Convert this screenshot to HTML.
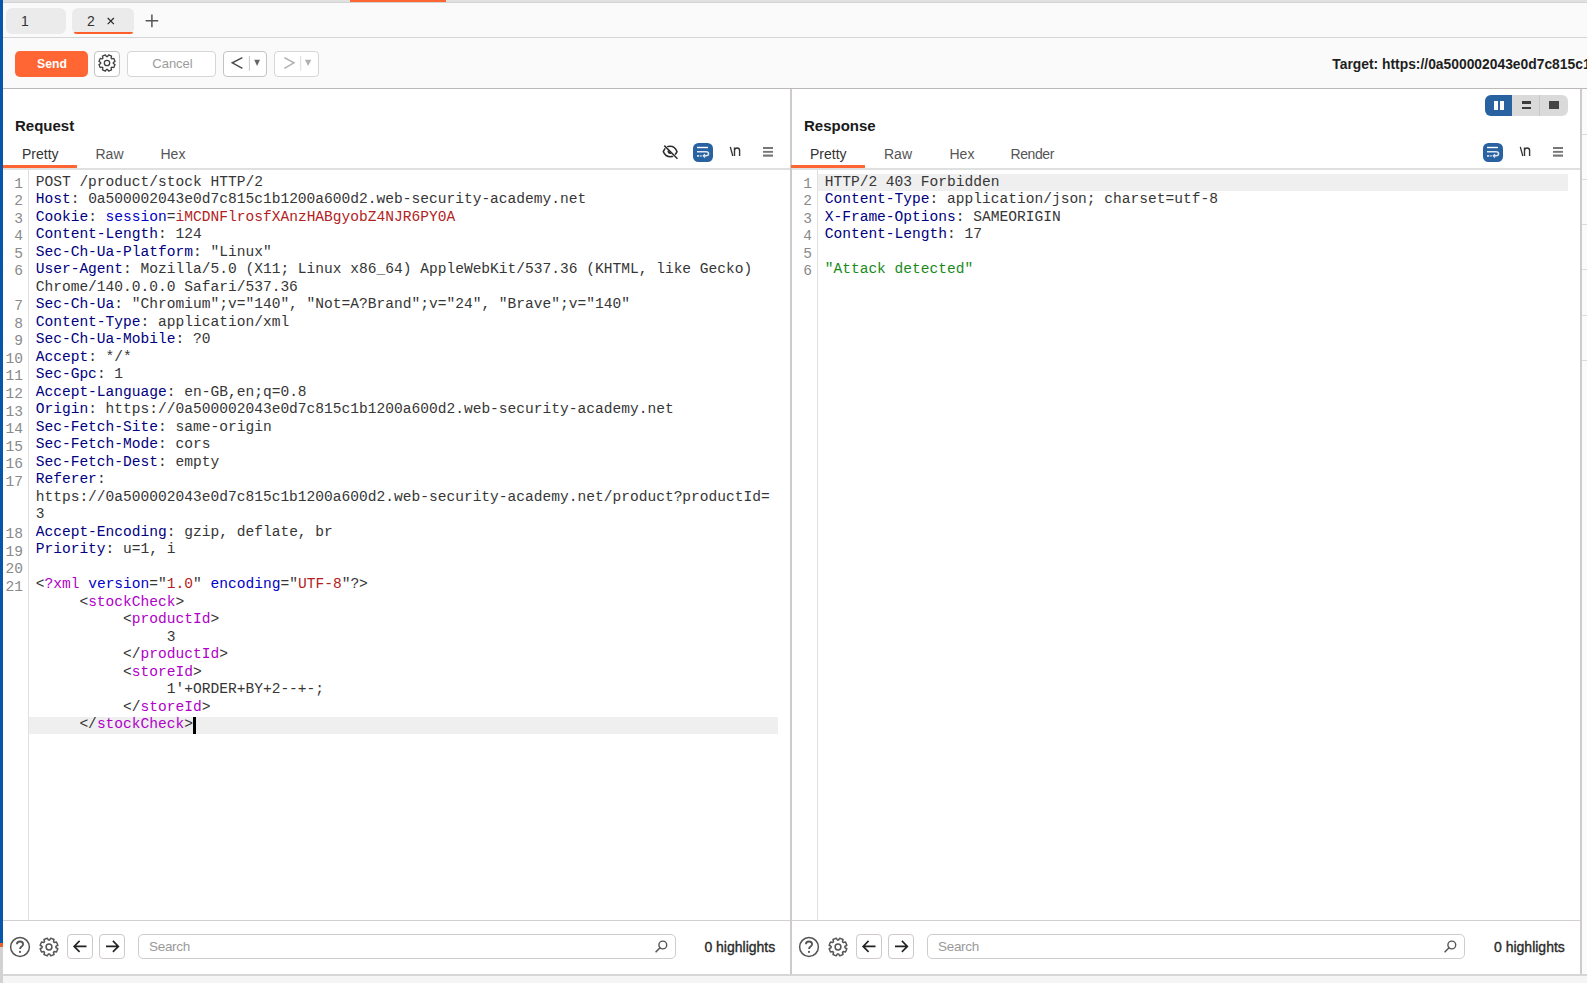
<!DOCTYPE html>
<html><head><meta charset="utf-8"><title>Repeater</title>
<style>
*{margin:0;padding:0;box-sizing:border-box}
html,body{width:1587px;height:983px;overflow:hidden}
body{position:relative;background:#fafafa;font-family:"Liberation Sans",sans-serif;color:#222}
.a{position:absolute}
.ui{font-family:"Liberation Sans",sans-serif}
.code{position:absolute;font-family:"Liberation Mono",monospace;font-size:14.57px;line-height:17.52px;white-space:pre;color:#363636}
.ln{position:absolute;font-family:"Liberation Mono",monospace;font-size:14.57px;line-height:17.52px;white-space:pre;color:#8a8a8a;text-align:right}
.h{color:#000080}
.b{color:#0000c8}
.r{color:#b22222}
.t{color:#b000c8}
.g{color:#1a8a1a}
.btn{position:absolute;border:1px solid #c4c4c4;border-radius:4px;background:#fff}
</style></head><body>

<!-- top strip -->
<div class="a" style="left:0;top:0;width:1587px;height:3px;background:#e1e1e1;border-bottom:1px solid #d0d4d4"></div>
<div class="a" style="left:350px;top:0;width:96px;height:2px;background:#ff6633"></div>

<!-- tab bar -->
<div class="a" style="left:6px;top:8px;width:60px;height:26px;background:#ebebeb;border-radius:6px"></div>
<div class="a ui" style="left:21px;top:11px;font-size:14px;line-height:20px;color:#333">1</div>
<div class="a" style="left:72px;top:8px;width:62px;height:26px;background:#ebebeb;border-radius:6px"></div>
<div class="a ui" style="left:87px;top:11px;font-size:14px;line-height:20px;color:#333">2</div>
<svg class="a" style="left:106px;top:16px" width="10" height="10" viewBox="0 0 10 10"><path d="M1.7,2 L7.9,8.2 M7.9,2 L1.7,8.2" stroke="#2a2a2a" stroke-width="1.2"/></svg>
<div class="a" style="left:74px;top:31.7px;width:59px;height:2.4px;background:#ff5f2a;border-radius:0 0 3px 3px"></div>
<svg class="a" style="left:144px;top:13px" width="16" height="16" viewBox="0 0 16 16"><path d="M1.6,7.85 L14.2,7.85 M7.9,1.4 L7.9,14.3" stroke="#555" stroke-width="1.5"/></svg>
<div class="a" style="left:3px;top:36.5px;width:1584px;height:1.5px;background:#d3d6d6"></div>

<!-- toolbar -->
<div class="a" style="left:15px;top:50.5px;width:73px;height:26.5px;background:#ff6633;border-radius:5px"></div>
<div class="a ui" style="left:15.5px;top:55.8px;width:73px;text-align:center;font-size:12.2px;font-weight:bold;line-height:16px;color:#fff">Send</div>
<div class="btn" style="left:94px;top:51px;width:26px;height:25.5px"></div>
<div class="btn" style="left:127px;top:51px;width:89px;height:25.5px;border:1.3px solid #d6d6d6"></div>
<div class="a ui" style="left:128px;top:56px;width:89px;text-align:center;font-size:13px;line-height:16px;color:#9c9c9c">Cancel</div>
<div class="btn" style="left:223px;top:51px;width:44px;height:25.5px"></div>
<div class="btn" style="left:274px;top:51px;width:44.5px;height:25.5px;border-color:#d6d6d6"></div>
<div class="a ui" style="right:0;top:56px;font-size:13.85px;font-weight:bold;line-height:16px;color:#1e1e1e;left:1332.3px;white-space:nowrap">Target: https://0a500002043e0d7c815c1b1200a600d2.web-security-academy.net</div>
<div class="a" style="left:3px;top:88px;width:1584px;height:1.4px;background:#bdb9b9"></div>

<!-- panels background -->
<div class="a" style="left:3px;top:89.4px;width:1578px;height:885px;background:#fff"></div>
<div class="a" style="left:790px;top:88.5px;width:2px;height:886px;background:#cfcbcb"></div>
<div class="a" style="left:1580px;top:88.5px;width:2px;height:886px;background:#cfcbcb"></div>
<div class="a" style="left:1582px;top:89.5px;width:5px;height:885px;background:#fbfbfb"></div>


<!-- REQUEST PANEL -->
<div class="a ui" style="left:15px;top:116px;font-size:15px;font-weight:bold;line-height:20px;color:#1a1a1a">Request</div>
<div class="a ui" style="left:22px;top:145px;font-size:14px;line-height:18px;color:#333">Pretty</div>
<div class="a ui" style="left:95.5px;top:145px;font-size:14px;line-height:18px;color:#555">Raw</div>
<div class="a ui" style="left:160.5px;top:145px;font-size:14px;line-height:18px;color:#555">Hex</div>
<div class="a" style="left:3px;top:168px;width:787px;height:1.5px;background:#dfe1e1"></div>
<div class="a" style="left:3px;top:165px;width:73.5px;height:3px;background:#ff6633"></div>
<div class="a" style="left:28px;top:169.5px;width:1px;height:750px;background:#e0e0e0"></div>
<div class="a" style="left:29px;top:716.5px;width:749px;height:17.5px;background:#efefef"></div>
<div class="a" style="left:193px;top:716.5px;width:2.5px;height:17.5px;background:#000"></div>
<div class="ln" style="left:0;width:23px;top:175.8px">1
2
3
4
5
6

7
8
9
10
11
12
13
14
15
16
17


18
19
20
21







</div>
<div class="code" style="left:35.7px;top:173.5px">POST /product/stock HTTP/2
<span class="h">Host</span>: 0a500002043e0d7c815c1b1200a600d2.web-security-academy.net
<span class="h">Cookie</span>: <span class="b">session</span>=<span class="r">iMCDNFlrosfXAnzHABgyobZ4NJR6PY0A</span>
<span class="h">Content-Length</span>: 124
<span class="h">Sec-Ch-Ua-Platform</span>: &quot;Linux&quot;
<span class="h">User-Agent</span>: Mozilla/5.0 (X11; Linux x86_64) AppleWebKit/537.36 (KHTML, like Gecko)
Chrome/140.0.0.0 Safari/537.36
<span class="h">Sec-Ch-Ua</span>: &quot;Chromium&quot;;v=&quot;140&quot;, &quot;Not=A?Brand&quot;;v=&quot;24&quot;, &quot;Brave&quot;;v=&quot;140&quot;
<span class="h">Content-Type</span>: application/xml
<span class="h">Sec-Ch-Ua-Mobile</span>: ?0
<span class="h">Accept</span>: */*
<span class="h">Sec-Gpc</span>: 1
<span class="h">Accept-Language</span>: en-GB,en;q=0.8
<span class="h">Origin</span>: https://0a500002043e0d7c815c1b1200a600d2.web-security-academy.net
<span class="h">Sec-Fetch-Site</span>: same-origin
<span class="h">Sec-Fetch-Mode</span>: cors
<span class="h">Sec-Fetch-Dest</span>: empty
<span class="h">Referer</span>:
https://0a500002043e0d7c815c1b1200a600d2.web-security-academy.net/product?productId=
3
<span class="h">Accept-Encoding</span>: gzip, deflate, br
<span class="h">Priority</span>: u=1, i

&lt;<span class="t">?xml</span> <span class="b">version</span>=&quot;<span class="r">1.0</span>&quot; <span class="b">encoding</span>=&quot;<span class="r">UTF-8</span>&quot;?&gt;
     &lt;<span class="t">stockCheck</span>&gt;
          &lt;<span class="t">productId</span>&gt;
               3
          &lt;/<span class="t">productId</span>&gt;
          &lt;<span class="t">storeId</span>&gt;
               1&#x27;+ORDER+BY+2--+-;
          &lt;/<span class="t">storeId</span>&gt;
     &lt;/<span class="t">stockCheck</span>&gt;</div>

<!-- RESPONSE PANEL -->
<div class="a ui" style="left:804px;top:116px;font-size:15px;font-weight:bold;line-height:20px;color:#1a1a1a">Response</div>
<div class="a ui" style="left:810px;top:145px;font-size:14px;line-height:18px;color:#333">Pretty</div>
<div class="a ui" style="left:884px;top:145px;font-size:14px;line-height:18px;color:#555">Raw</div>
<div class="a ui" style="left:949.5px;top:145px;font-size:14px;line-height:18px;color:#555">Hex</div>
<div class="a ui" style="left:1010.5px;top:145px;font-size:14px;line-height:18px;color:#555;letter-spacing:-0.4px">Render</div>
<div class="a" style="left:792px;top:168px;width:788px;height:1.5px;background:#dfe1e1"></div>
<div class="a" style="left:791px;top:165px;width:74px;height:3px;background:#ff6633"></div>
<div class="a" style="left:817px;top:169.5px;width:1px;height:750px;background:#e0e0e0"></div>
<div class="a" style="left:818px;top:173.5px;width:750px;height:17.5px;background:#efefef"></div>
<div class="ln" style="left:789px;width:23px;top:175.8px">1
2
3
4
5
6</div>
<div class="code" style="left:824.7px;top:173.5px">HTTP/2 403 Forbidden
<span class="h">Content-Type</span>: application/json; charset=utf-8
<span class="h">X-Frame-Options</span>: SAMEORIGIN
<span class="h">Content-Length</span>: 17

<span class="g">&quot;Attack detected&quot;</span></div>


<!-- toolbar icons -->
<svg class="a" style="left:94.8px;top:51.4px" width="24" height="24" viewBox="0 0 24 24"><path d="M18.28,12.49 L20.04,13.60 L18.82,16.56 L16.79,16.09 L16.09,16.79 L16.56,18.82 L13.60,20.04 L12.49,18.28 L11.51,18.28 L10.40,20.04 L7.44,18.82 L7.91,16.79 L7.21,16.09 L5.18,16.56 L3.96,13.60 L5.72,12.49 L5.72,11.51 L3.96,10.40 L5.18,7.44 L7.21,7.91 L7.91,7.21 L7.44,5.18 L10.40,3.96 L11.51,5.72 L12.49,5.72 L13.60,3.96 L16.56,5.18 L16.09,7.21 L16.79,7.91 L18.82,7.44 L20.04,10.40 L18.28,11.51 Z" fill="none" stroke="#404040" stroke-width="1.3" stroke-linejoin="round"/><circle cx="12" cy="12" r="2.7" fill="none" stroke="#404040" stroke-width="1.3"/></svg>
<svg class="a" style="left:223px;top:50.5px" width="96" height="26" viewBox="0 0 96 26"><path d="M19.4,6.6 L9.3,11.8 L19.4,17.4" fill="none" stroke="#4a4a4a" stroke-width="1.5"/><line x1="26.4" y1="4.9" x2="26.4" y2="19.8" stroke="#c8c8c8" stroke-width="1"/><path d="M31.2,8.7 L37,8.7 L34.1,14.9 Z" fill="#666"/>
<path d="M61.3,6.6 L71,11.8 L61.3,17.4" fill="none" stroke="#b0b0b0" stroke-width="1.5"/><line x1="77.7" y1="4.9" x2="77.7" y2="19.8" stroke="#dcdcdc" stroke-width="1"/><path d="M82,8.7 L88.3,8.7 L85.15,14.9 Z" fill="#b0b0b0"/></svg>

<!-- request panel icons -->
<svg class="a" style="left:660px;top:143px" width="20" height="18" viewBox="0 0 20 18"><path d="M3.3,8.6 C6.2,1.6 14.2,1.6 17,8.6 C14.2,15.4 6.2,15.4 3.3,8.6 Z" fill="none" stroke="#2e2e2e" stroke-width="1.5"/><line x1="4.3" y1="2.6" x2="17.5" y2="15.8" stroke="#fff" stroke-width="2.6"/><path d="M8.0,6.9 A2.5,2.5 0 0 0 11.5,10.4 Z" fill="#2e2e2e"/><line x1="4.3" y1="2.6" x2="17.5" y2="15.8" stroke="#2e2e2e" stroke-width="1.5"/></svg>

<svg class="a" style="left:693px;top:143px" width="20" height="19" viewBox="0 0 20 19"><rect x="0" y="0" width="20" height="19" rx="5.5" fill="#2962a0"/><path d="M4,4.5 L15,4.5" stroke="#fff" stroke-width="1.4"/><path d="M4,8.7 L13,8.7 C16.4,8.7 16.4,12.8 13,12.8 L10.6,12.8" fill="none" stroke="#dfe8f2" stroke-width="1.5"/><path d="M12,11.1 L10.3,12.8 L12,14.5" fill="none" stroke="#dfe8f2" stroke-width="1.3"/><rect x="4" y="12" width="2.2" height="1.8" fill="#cfdcea"/><rect x="7.3" y="12" width="1.3" height="1.8" fill="#cfdcea"/></svg>
<svg class="a" style="left:729px;top:145px" width="14" height="13" viewBox="0 0 14 13"><path d="M1.3,1.8 L3.8,11" fill="none" stroke="#333" stroke-width="1.3"/><path d="M5.5,11 L5.5,2.6 M5.5,5.5 C5.5,2.2 10.6,2.2 10.6,5.5 L10.6,11" fill="none" stroke="#333" stroke-width="1.4"/></svg>
<svg class="a" style="left:763px;top:146px" width="11" height="12" viewBox="0 0 11 12"><rect x="0" y="1" width="10" height="2" fill="#777"/><rect x="0" y="4.9" width="10" height="1.9" fill="#777"/><rect x="0" y="8.5" width="10" height="2.2" fill="#777"/></svg>

<svg class="a" style="left:1483px;top:143px" width="20" height="19" viewBox="0 0 20 19"><rect x="0" y="0" width="20" height="19" rx="5.5" fill="#2962a0"/><path d="M4,4.5 L15,4.5" stroke="#fff" stroke-width="1.4"/><path d="M4,8.7 L13,8.7 C16.4,8.7 16.4,12.8 13,12.8 L10.6,12.8" fill="none" stroke="#dfe8f2" stroke-width="1.5"/><path d="M12,11.1 L10.3,12.8 L12,14.5" fill="none" stroke="#dfe8f2" stroke-width="1.3"/><rect x="4" y="12" width="2.2" height="1.8" fill="#cfdcea"/><rect x="7.3" y="12" width="1.3" height="1.8" fill="#cfdcea"/></svg>
<svg class="a" style="left:1519px;top:145px" width="14" height="13" viewBox="0 0 14 13"><path d="M1.3,1.8 L3.8,11" fill="none" stroke="#333" stroke-width="1.3"/><path d="M5.5,11 L5.5,2.6 M5.5,5.5 C5.5,2.2 10.6,2.2 10.6,5.5 L10.6,11" fill="none" stroke="#333" stroke-width="1.4"/></svg>
<svg class="a" style="left:1553px;top:146px" width="11" height="12" viewBox="0 0 11 12"><rect x="0" y="1" width="10" height="2" fill="#777"/><rect x="0" y="4.9" width="10" height="1.9" fill="#777"/><rect x="0" y="8.5" width="10" height="2.2" fill="#777"/></svg>

<!-- layout segmented control -->
<div class="a" style="left:1485px;top:95px;width:82.5px;height:20.5px;background:#dadada;border-radius:6px;overflow:hidden"><div style="position:absolute;left:0;top:0;width:26.7px;height:20.5px;background:#2962a0"></div><div style="position:absolute;left:53.8px;top:0;width:1px;height:20.5px;background:#c8c8c8"></div></div>
<div class="a" style="left:1493.7px;top:101px;width:4.3px;height:8.6px;background:#fff"></div>
<div class="a" style="left:1500px;top:101px;width:4.3px;height:8.6px;background:#fff"></div>
<div class="a" style="left:1521.7px;top:101.4px;width:9.7px;height:2.4px;background:#3c3c3c"></div>
<div class="a" style="left:1521.7px;top:106.7px;width:9.7px;height:2.5px;background:#3c3c3c"></div>
<div class="a" style="left:1549px;top:101px;width:10px;height:8px;background:#454545"></div>
<div class="a" style="left:1582px;top:134px;width:5px;height:1px;background:#dcdcdc"></div><div class="a" style="left:1582px;top:179px;width:5px;height:1px;background:#dcdcdc"></div><div class="a" style="left:1582px;top:224px;width:5px;height:1px;background:#dcdcdc"></div><div class="a" style="left:1582px;top:269px;width:5px;height:1px;background:#dcdcdc"></div><div class="a" style="left:1582px;top:315px;width:5px;height:1px;background:#dcdcdc"></div><div class="a" style="left:1582px;top:360px;width:5px;height:1px;background:#dcdcdc"></div>
<svg class="a" style="left:8px;top:935px" width="24" height="24" viewBox="0 0 24 24"><circle cx="12" cy="12" r="9.4" fill="none" stroke="#555" stroke-width="1.5"/><path d="M8.9,9.2 C8.9,5.6 15.1,5.6 15.1,9.2 C15.1,11.6 12,11.5 12,14.1" fill="none" stroke="#555" stroke-width="1.8"/><circle cx="12" cy="16.9" r="1.05" fill="#555"/></svg>
<svg class="a" style="left:36.6px;top:934.5px" width="24" height="24" viewBox="0 0 24 24"><path d="M18.88,12.54 L20.83,13.76 L19.48,17.00 L17.25,16.48 L16.48,17.25 L17.00,19.48 L13.76,20.83 L12.54,18.88 L11.46,18.88 L10.24,20.83 L7.00,19.48 L7.52,17.25 L6.75,16.48 L4.52,17.00 L3.17,13.76 L5.12,12.54 L5.12,11.46 L3.17,10.24 L4.52,7.00 L6.75,7.52 L7.52,6.75 L7.00,4.52 L10.24,3.17 L11.46,5.12 L12.54,5.12 L13.76,3.17 L17.00,4.52 L16.48,6.75 L17.25,7.52 L19.48,7.00 L20.83,10.24 L18.88,11.46 Z" fill="none" stroke="#555" stroke-width="1.5" stroke-linejoin="round"/><circle cx="12" cy="12" r="2.9" fill="none" stroke="#555" stroke-width="1.5"/></svg>
<div class="btn" style="left:67px;top:933.5px;width:25.5px;height:25px;border-color:#cfc9c9"></div>
<div class="btn" style="left:99px;top:933.5px;width:25.5px;height:25px;border-color:#cfc9c9"></div>
<svg class="a" style="left:67px;top:933.5px" width="58" height="25" viewBox="0 0 58 25"><path d="M19.5,12.4 L7.2,12.4 M12.6,6.9 L7.1,12.4 L12.6,17.9" fill="none" stroke="#222" stroke-width="1.6"/><path d="M39,12.4 L51.3,12.4 M45.9,6.9 L51.4,12.4 L45.9,17.9" fill="none" stroke="#222" stroke-width="1.6"/></svg>
<div class="btn" style="left:138px;top:934px;width:538px;height:24.5px;border-color:#d0cccc;border-radius:5px"></div>
<div class="a ui" style="left:149px;top:938px;font-size:13.5px;line-height:17px;color:#9a9a9a;letter-spacing:-0.3px">Search</div>
<svg class="a" style="left:653px;top:938px" width="17" height="17" viewBox="0 0 17 17"><circle cx="9.8" cy="7" r="3.9" fill="none" stroke="#555" stroke-width="1.4"/><line x1="7" y1="9.8" x2="2.6" y2="14.2" stroke="#555" stroke-width="1.5"/></svg>

<svg class="a" style="left:797px;top:935px" width="24" height="24" viewBox="0 0 24 24"><circle cx="12" cy="12" r="9.4" fill="none" stroke="#555" stroke-width="1.5"/><path d="M8.9,9.2 C8.9,5.6 15.1,5.6 15.1,9.2 C15.1,11.6 12,11.5 12,14.1" fill="none" stroke="#555" stroke-width="1.8"/><circle cx="12" cy="16.9" r="1.05" fill="#555"/></svg>
<svg class="a" style="left:825.6px;top:934.5px" width="24" height="24" viewBox="0 0 24 24"><path d="M18.88,12.54 L20.83,13.76 L19.48,17.00 L17.25,16.48 L16.48,17.25 L17.00,19.48 L13.76,20.83 L12.54,18.88 L11.46,18.88 L10.24,20.83 L7.00,19.48 L7.52,17.25 L6.75,16.48 L4.52,17.00 L3.17,13.76 L5.12,12.54 L5.12,11.46 L3.17,10.24 L4.52,7.00 L6.75,7.52 L7.52,6.75 L7.00,4.52 L10.24,3.17 L11.46,5.12 L12.54,5.12 L13.76,3.17 L17.00,4.52 L16.48,6.75 L17.25,7.52 L19.48,7.00 L20.83,10.24 L18.88,11.46 Z" fill="none" stroke="#555" stroke-width="1.5" stroke-linejoin="round"/><circle cx="12" cy="12" r="2.9" fill="none" stroke="#555" stroke-width="1.5"/></svg>
<div class="btn" style="left:856px;top:933.5px;width:25.5px;height:25px;border-color:#cfc9c9"></div>
<div class="btn" style="left:888px;top:933.5px;width:25.5px;height:25px;border-color:#cfc9c9"></div>
<svg class="a" style="left:856px;top:933.5px" width="58" height="25" viewBox="0 0 58 25"><path d="M19.5,12.4 L7.2,12.4 M12.6,6.9 L7.1,12.4 L12.6,17.9" fill="none" stroke="#222" stroke-width="1.6"/><path d="M39,12.4 L51.3,12.4 M45.9,6.9 L51.4,12.4 L45.9,17.9" fill="none" stroke="#222" stroke-width="1.6"/></svg>
<div class="btn" style="left:927px;top:934px;width:538px;height:24.5px;border-color:#d0cccc;border-radius:5px"></div>
<div class="a ui" style="left:938px;top:938px;font-size:13.5px;line-height:17px;color:#9a9a9a;letter-spacing:-0.3px">Search</div>
<svg class="a" style="left:1442px;top:938px" width="17" height="17" viewBox="0 0 17 17"><circle cx="9.8" cy="7" r="3.9" fill="none" stroke="#555" stroke-width="1.4"/><line x1="7" y1="9.8" x2="2.6" y2="14.2" stroke="#555" stroke-width="1.5"/></svg>

<div class="a ui" style="left:704.4px;top:939px;font-size:14px;line-height:17px;color:#2a2a2a;-webkit-text-stroke:0.35px #2a2a2a">0 highlights</div>
<div class="a ui" style="left:1494px;top:939px;font-size:14px;line-height:17px;color:#2a2a2a;-webkit-text-stroke:0.35px #2a2a2a">0 highlights</div>
<div class="a" style="left:3px;top:919.5px;width:787px;height:1.2px;background:#d4d0d0"></div>
<div class="a" style="left:792px;top:919.5px;width:788px;height:1.2px;background:#d4d0d0"></div>

<!-- blue left strip -->
<div class="a" style="left:0;top:0;width:3px;height:943px;background:#0656aa"></div>
<div class="a" style="left:0;top:943px;width:3px;height:4px;background:#e8622e"></div>
<div class="a" style="left:0;top:947px;width:3px;height:36px;background:#d2d2d2"></div>

<!-- bottom line -->
<div class="a" style="left:3px;top:974px;width:1584px;height:1.5px;background:#d6d6d6"></div>
<div class="a" style="left:3px;top:975.5px;width:1584px;height:8px;background:#f5f5f5"></div>

</body></html>
